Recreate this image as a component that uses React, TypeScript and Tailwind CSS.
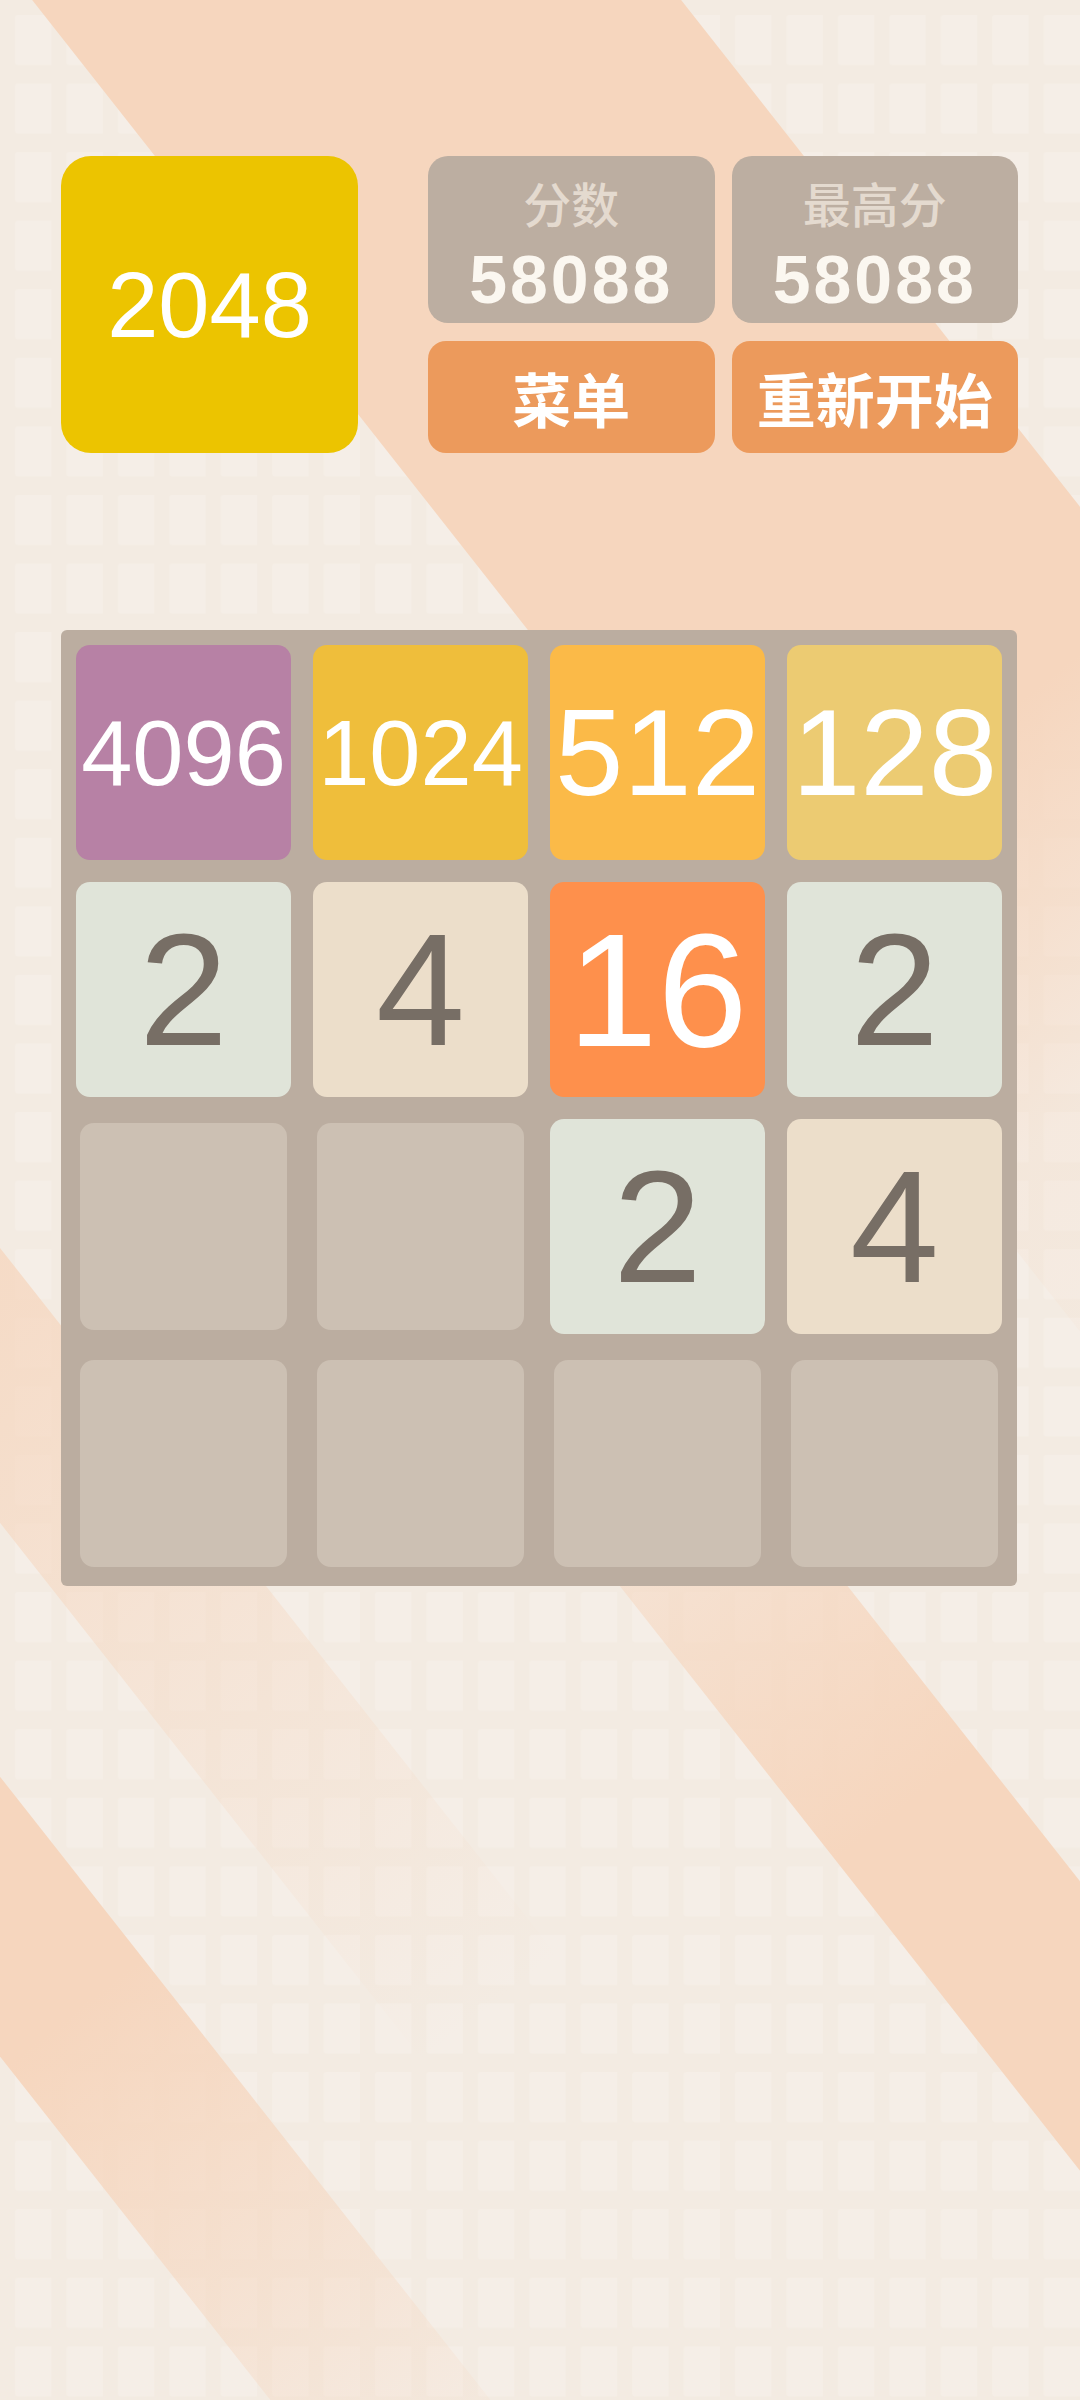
import React from "react";

const PEACH = "#f6d6be";

function Background() {
  return (
    <svg
      className="absolute inset-0"
      width="1080"
      height="2400"
      viewBox="0 0 1080 2400"
      aria-hidden="true"
    >
      <defs>
        <linearGradient id="gA" x1="0" y1="0" x2="1" y2="0">
          <stop offset="0" stopColor={PEACH} stopOpacity="1" />
          <stop offset="0.64" stopColor={PEACH} stopOpacity="1" />
          <stop offset="0.81" stopColor={PEACH} stopOpacity="0.2" />
          <stop offset="1" stopColor={PEACH} stopOpacity="0" />
        </linearGradient>
        <linearGradient id="gB" x1="0" y1="0" x2="1" y2="0">
          <stop offset="0" stopColor={PEACH} stopOpacity="0" />
          <stop offset="0.54" stopColor={PEACH} stopOpacity="1" />
          <stop offset="1" stopColor={PEACH} stopOpacity="1" />
        </linearGradient>
        <linearGradient id="gC" x1="0" y1="0" x2="1" y2="0">
          <stop offset="0" stopColor={PEACH} stopOpacity="1" />
          <stop offset="0.5" stopColor={PEACH} stopOpacity="1" />
          <stop offset="0.93" stopColor={PEACH} stopOpacity="0" />
        </linearGradient>
        <linearGradient id="gD" x1="0" y1="0" x2="1" y2="0">
          <stop offset="0" stopColor={PEACH} stopOpacity="0.85" />
          <stop offset="0.25" stopColor={PEACH} stopOpacity="0.75" />
          <stop offset="0.86" stopColor={PEACH} stopOpacity="0" />
        </linearGradient>
        <pattern
          id="grid"
          x="0"
          y="0"
          width="51.43"
          height="68.57"
          patternUnits="userSpaceOnUse"
        >
          <rect x="15" y="15" width="40" height="50" rx="3" fill="#ffffff" opacity="0.16" />
        </pattern>
      </defs>
      <rect x="0" y="0" width="1080" height="2400" fill="#f3ebe2" />
      <rect x="0" y="0" width="1080" height="2400" fill="url(#grid)" />
      <g transform="rotate(51.8 540 1200)">
        <rect x="-900" y="347" width="2100" height="510" fill="url(#gA)" />
        <rect x="540" y="1197" width="1300" height="179" fill="url(#gB)" />
        <rect x="140" y="1981" width="1500" height="173" fill="url(#gC)" />
        <rect x="-60" y="1654" width="1400" height="170" fill="url(#gD)" />
      </g>
    </svg>
  );
}

type TileStyle = { cls: string };

const tileStyles: Record<number, TileStyle> = {
  2: { cls: "bg-[#e0e4d9] text-[#776e65] text-[160px]" },
  4: { cls: "bg-[#ecdeca] text-[#776e65] text-[160px]" },
  16: { cls: "bg-[#fe904c] text-white text-[162px]" },
  128: { cls: "bg-[#eccb72] text-white text-[123px]" },
  512: { cls: "bg-[#fbba48] text-white text-[123px]" },
  1024: { cls: "bg-[#efbe3b] text-white text-[92px]" },
  4096: { cls: "bg-[#b781a5] text-white text-[92px]" },
};

const board: number[][] = [
  [4096, 1024, 512, 128],
  [2, 4, 16, 2],
  [0, 0, 2, 4],
  [0, 0, 0, 0],
];

function Cell({ value }: { value: number }) {
  if (!value) {
    return <div className="rounded-[14px] bg-[#ccc0b3] aspect-square" />;
  }
  const s = tileStyles[value];
  return (
    <div
      className={`-m-1 rounded-[14px] flex items-center justify-center leading-none whitespace-nowrap font-['Liberation_Sans',Arial,sans-serif] ${s.cls}`}
    >
      {value}
    </div>
  );
}

export default function App() {
  return (
    <div className="relative w-[1080px] h-[2400px] overflow-hidden bg-[#f3ebe2]">
      <Background />
      <div className="relative flex flex-col px-[61px] pt-[156px]">
        {/* Header */}
        <div className="flex items-start">
          <div className="w-[297px] h-[297px] rounded-[30px] bg-[#ecc400] flex items-center justify-center">
            <span className="text-white text-[92px] leading-none font-['Liberation_Sans',Arial,sans-serif]">
              2048
            </span>
          </div>
          <div className="ml-[70px] grid grid-cols-2 grid-rows-[167px_112px] gap-x-[17px] gap-y-[18px] w-[590px]">
            {[
              { label: "分数", value: "58088" },
              { label: "最高分", value: "58088" },
            ].map((b) => (
              <div
                key={b.label}
                className="rounded-[20px] bg-[#bcaea1] flex flex-col items-center pt-[22px]"
              >
                <span className="text-[#e4dacf] text-[48px] leading-[48px] font-medium font-['Noto_Sans_CJK_SC',sans-serif]">
                  {b.label}
                </span>
                <span className="mt-[20px] text-[#fbf7f0] text-[68px] leading-[67px] font-bold tracking-[3px] font-['Liberation_Sans',Arial,sans-serif]">
                  {b.value}
                </span>
              </div>
            ))}
            {["菜单", "重新开始"].map((t) => (
              <div
                key={t}
                className="rounded-[18px] bg-[#ec9a5c] flex items-center justify-center"
              >
                <span className="text-white text-[59px] leading-none font-bold font-['Noto_Sans_CJK_SC',sans-serif]">
                  {t}
                </span>
              </div>
            ))}
          </div>
        </div>

        {/* Board */}
        <div className="mt-[177px] w-[956px] h-[956px] rounded-[6px] bg-[#bbada0] p-[19px] grid grid-cols-4 grid-rows-4 gap-[30px]">
          {board.flat().map((v, i) => (
            <Cell key={i} value={v} />
          ))}
        </div>
      </div>
    </div>
  );
}
